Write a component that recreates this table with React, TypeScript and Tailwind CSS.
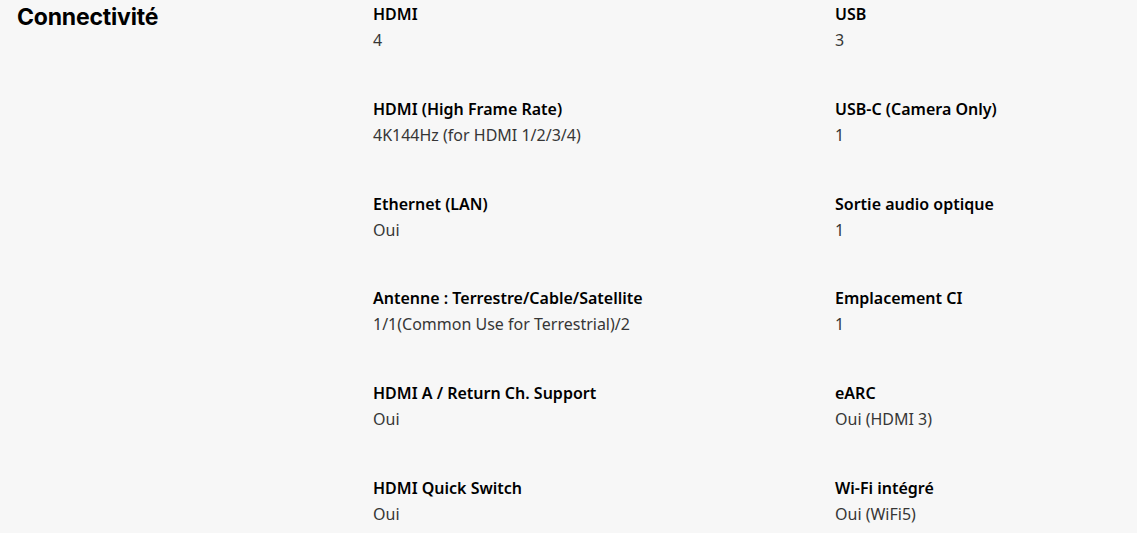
import React from 'react';

type Spec = { label: string; value: string };

const specs: Spec[] = [
  { label: 'HDMI', value: '4' },
  { label: 'USB', value: '3' },
  { label: 'HDMI (High Frame Rate)', value: '4K144Hz (for HDMI 1/2/3/4)' },
  { label: 'USB-C (Camera Only)', value: '1' },
  { label: 'Ethernet (LAN)', value: 'Oui' },
  { label: 'Sortie audio optique', value: '1' },
  { label: 'Antenne : Terrestre/Cable/Satellite', value: '1/1(Common Use for Terrestrial)/2' },
  { label: 'Emplacement CI', value: '1' },
  { label: 'HDMI A / Return Ch. Support', value: 'Oui' },
  { label: 'eARC', value: 'Oui (HDMI 3)' },
  { label: 'HDMI Quick Switch', value: 'Oui' },
  { label: 'Wi-Fi intégré', value: 'Oui (WiFi5)' },
];

const App: React.FC = () => {
  return (
    <div className="w-[1137px] h-[533px] overflow-hidden bg-[#f7f7f7] flex">
      <div className="w-[373px] shrink-0 pl-[17px] pt-[3px]">
        <h2 className="font-['Inter',sans-serif] font-bold text-[23px] leading-[28px] tracking-[-0.2px] text-black">
          Connectivité
        </h2>
      </div>

      <div className="flex-1 pt-[2px] grid grid-cols-[462px_1fr] gap-y-[44.8px] content-start font-['Noto_Sans',sans-serif]">
        {specs.map((s) => (
          <div key={s.label}>
            <p className="text-[16px] leading-[24px] font-semibold text-black">{s.label}</p>
            <p className="mt-[2px] text-[16px] leading-[24px] text-[#363636]">{s.value}</p>
          </div>
        ))}
      </div>
    </div>
  );
};

export default App;
